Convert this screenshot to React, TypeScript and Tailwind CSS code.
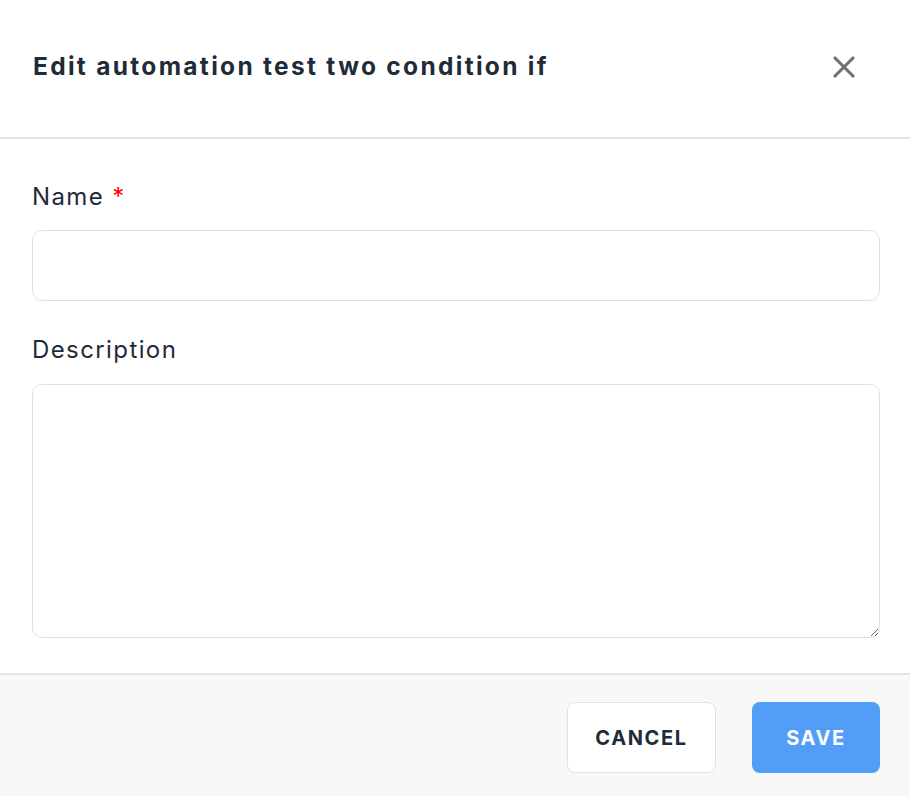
import { X } from 'lucide-react'

export default function App() {
  return (
    <div className="w-[910px] h-[796px] bg-white flex flex-col font-['Inter','Noto_Sans',sans-serif] text-[#1e2c3a]">
      {/* Header */}
      <div className="h-[139px] shrink-0 flex items-center justify-between pl-[33px] pr-[48px] pb-[4px] border-b-2 border-[#e4e4e4]">
        <h1 className="text-[24.5px] font-bold tracking-[2.3px]">Edit automation test two condition if</h1>
        <button className="text-[#707070]">
          <X size={36} strokeWidth={2.1} />
        </button>
      </div>

      {/* Body */}
      <div className="flex-1 flex flex-col pl-[32px] pr-[30px] pt-[40px] pb-[35px]">
        <label className="text-[24px] leading-[36px] tracking-[1.4px]">
          Name <span className="text-[#ff0000]">*</span>
        </label>
        <input
          type="text"
          className="mt-[15px] h-[71px] w-full rounded-[10px] border border-[#e0e0e0] px-4 text-[20px] outline-none"
        />
        <label className="mt-[31px] text-[24px] leading-[36px] tracking-[1.4px]">Description</label>
        <textarea className="mt-[16px] h-[254px] w-full rounded-[10px] border border-[#e0e0e0] px-4 py-3 text-[20px] outline-none resize-y" />
      </div>

      {/* Footer */}
      <div className="h-[123px] shrink-0 bg-[#f8f8f8] border-t-2 border-[#e4e4e4] flex items-start justify-end gap-[36px] pt-[27px] pr-[30px]">
        <button className="h-[71px] w-[149px] rounded-[8px] border border-[#e2e2e2] bg-white text-[20px] font-bold tracking-[1.6px] text-[#1e2c3a]">
          CANCEL
        </button>
        <button className="h-[71px] w-[128px] rounded-[8px] bg-[#529df8] text-[20px] font-bold tracking-[1.6px] text-white">
          SAVE
        </button>
      </div>
    </div>
  )
}
